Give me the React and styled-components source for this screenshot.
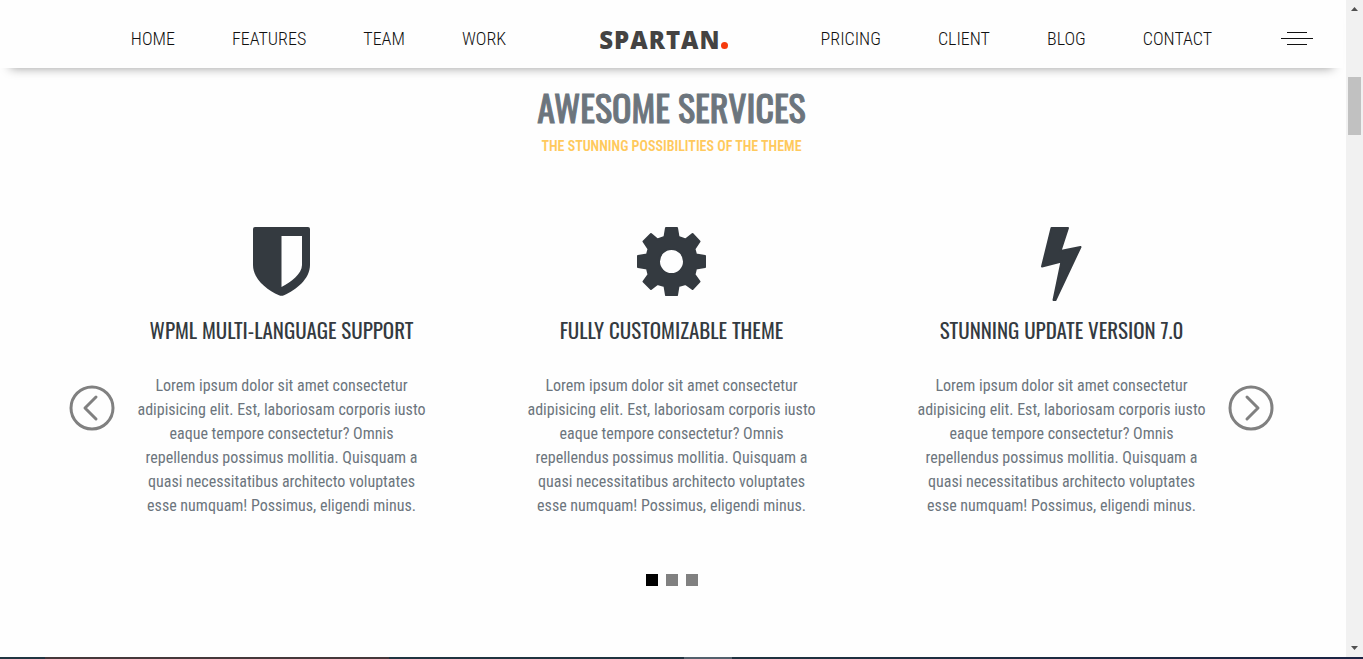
import React from "react";
import styled, { createGlobalStyle } from "styled-components";

const condensed = `"Roboto Condensed", "Liberation Sans Narrow", "Liberation Sans", sans-serif`;
const display = `Oswald, "Roboto Condensed", "Liberation Sans Narrow", "Liberation Sans", sans-serif`;

const GlobalStyle = createGlobalStyle`
  *, *::before, *::after { box-sizing: border-box; }
  body { margin: 0; background: #fff; font-family: ${condensed}; }
`;

const Screen = styled.div`
  display: flex;
  flex-direction: column;
  min-height: 100vh;
`;

const Viewport = styled.div`
  display: flex;
  flex: 1;
`;

const Page = styled.div`
  flex: 1;
  padding-right: 3px;
  background: #fefefe;
`;

const Header = styled.header`
  display: grid;
  grid-template-columns: 62px 1fr 62px;
  align-items: center;
  height: 68px;
  padding-top: 9px;
  background: #fefefe;
  box-shadow: 0 10px 10px -10px rgba(0, 0, 0, 0.4);
`;

const NavBar = styled.div`
  grid-column: 2;
  display: flex;
  align-items: center;
  justify-content: center;
  gap: 93px;
`;

const Nav = styled.nav`
  display: flex;
  gap: 57px;
`;

const NavLink = styled.a`
  color: #111;
  font-size: 18px;
  line-height: 24px;
  font-weight: 300;
  text-decoration: none;
`;

const Logo = styled.a`
  display: flex;
  align-items: baseline;
  padding-top: 2px;
  color: #444342;
  font-family: "Open Sans", "Noto Sans", sans-serif;
  font-size: 24px;
  line-height: 30px;
  font-weight: 800;
  letter-spacing: 1px;
  text-decoration: none;
`;

const LogoDot = styled.span`
  width: 7px;
  height: 7px;
  border-radius: 50%;
  background: #f63a0c;
`;

const MenuButton = styled.button`
  display: flex;
  flex-direction: column;
  align-items: center;
  gap: 5px;
  width: 32px;
  padding: 0;
  border: 0;
  background: none;
`;

const MenuLine = styled.span`
  width: ${(p) => (p.$wide ? 32 : 20)}px;
  height: 1px;
  background: #111;
`;

const Services = styled.section`
  padding: 15px 64px 71px;
  text-align: center;
`;

const Title = styled.h2`
  margin: 0;
  color: #6c757d;
  font-family: ${display};
  font-size: 36px;
  line-height: 48px;
  font-weight: 400;
  -webkit-text-stroke: 1px currentColor;
`;

const Subtitle = styled.p`
  margin: 5px 0 0;
  color: #ffc95c;
  font-size: 14px;
  line-height: 20px;
  font-weight: 600;
`;

const Carousel = styled.div`
  display: flex;
  align-items: center;
  justify-content: space-between;
  margin-top: 71px;
`;

const ArrowButton = styled.button`
  flex: none;
  width: 56px;
  height: 56px;
  margin-top: 70px;
  padding: 0;
  border: 0;
  background: none;
  color: #808080;
`;

const Slides = styled.div`
  display: grid;
  grid-template-columns: repeat(3, 1fr);
  gap: 90px;
  flex: 1;
  max-width: 1080px;
`;

const Card = styled.article`
  display: flex;
  flex-direction: column;
  align-items: center;
`;

const IconBox = styled.div`
  height: 80px;
  color: #343a40;
`;

const CardTitle = styled.h3`
  margin: 8px 0 0;
  color: #343a40;
  font-family: ${display};
  font-size: 21px;
  line-height: 30px;
  font-weight: 400;
  white-space: nowrap;
`;

const CardText = styled.p`
  max-width: 300px;
  margin: 29px 0 0;
  color: #6c757d;
  font-size: 16px;
  line-height: 24px;
`;

const Dots = styled.div`
  display: flex;
  justify-content: center;
  gap: 8px;
  margin-top: 56px;
`;

const Dot = styled.button`
  width: 12px;
  height: 12px;
  padding: 0;
  border: 0;
  background: ${(p) => (p.$active ? "#000" : "#808080")};
`;

const Scrollbar = styled.div`
  display: flex;
  flex-direction: column;
  align-items: center;
  justify-content: space-between;
  width: 17px;
  background: #f1f1f1;
`;

const ScrollArrow = styled.svg`
  display: block;
  width: 17px;
  height: 17px;
  fill: #505050;
`;

const ScrollTrack = styled.div`
  flex: 1;
  padding-top: 60px;
`;

const ScrollThumb = styled.div`
  width: 13px;
  height: 58px;
  background: #c1c1c1;
`;

const DesktopEdge = styled.footer`
  display: flex;
  height: 2px;
  background: linear-gradient(90deg, #213642, #1f3340 55%, #1b2444);
`;

const EdgeTab = styled.span`
  width: ${(p) => p.$width}px;
  margin-left: ${(p) => p.$space}px;
  background: ${(p) => p.$tone};
`;

const ShieldIcon = () => (
  <svg width="58" height="70" viewBox="0 0 58 70" aria-hidden="true">
    <path fill="currentColor" fillRule="evenodd" d="M2 0H55Q57 0 57 2V38C57 52 43 63 31 68.200Q28.500 69.200 26 68.200C14 63 0 52 0 38V2Q0 0 2 0ZM28.500 9V60C38 55 49 47 49 38V9Z" />
  </svg>
);

const GearIcon = () => (
  <svg width="70" height="70" viewBox="0 0 70 70" aria-hidden="true">
    <path
      fill="currentColor"
      fillRule="evenodd"
      stroke="currentColor"
      strokeWidth="2"
      strokeLinejoin="round"
      d="M29 1H40L41.500 10L48.500 12.500L55.500 7L62.500 14.500L57.500 22L59 27.500L68 29V40L59 41.500L57.500 47.500L62.500 54.500L55.500 62L48.500 57L41.500 59L40 68H29L27.500 59L20.500 57L14 62L6.500 54.500L11.500 47.500L10 41.500L1 40V29L10 27.500L11.500 22L6.500 14.500L14 7L20.500 12.500L27.500 10ZM34.500 22A12.500 12.500 0 1 0 34.500 47A12.500 12.500 0 1 0 34.500 22Z"
    />
  </svg>
);

const BoltIcon = () => (
  <svg width="42" height="76" viewBox="0 0 42 76" aria-hidden="true">
    <path fill="currentColor" stroke="currentColor" strokeWidth="2" strokeLinejoin="round" d="M10.500 1H27L19.500 24L39.500 20L14.500 73H12.500L20.500 34.500L1 39.500Z" />
  </svg>
);

const CircleArrow = ({ d }) => (
  <svg width="56" height="56" viewBox="0 0 56 56" fill="none" stroke="currentColor" strokeWidth="3" strokeLinecap="round" strokeLinejoin="round" aria-hidden="true">
    <circle cx="28" cy="28" r="21" />
    <path d={d} />
  </svg>
);

const leftLinks = ["HOME", "FEATURES", "TEAM", "WORK"];
const rightLinks = ["PRICING", "CLIENT", "BLOG", "CONTACT"];
const copy =
  "Lorem ipsum dolor sit amet consectetur adipisicing elit. Est, laboriosam corporis iusto eaque tempore consectetur? Omnis repellendus possimus mollitia. Quisquam a quasi necessitatibus architecto voluptates esse numquam! Possimus, eligendi minus.";
const services = [
  { title: "WPML MULTI-LANGUAGE SUPPORT", Icon: ShieldIcon },
  { title: "FULLY CUSTOMIZABLE THEME", Icon: GearIcon },
  { title: "STUNNING UPDATE VERSION 7.0", Icon: BoltIcon },
];

const Links = ({ items, label }) => (
  <Nav aria-label={label}>
    {items.map((item) => (
      <NavLink key={item} href={`#${item.toLowerCase()}`}>{item}</NavLink>
    ))}
  </Nav>
);

export default function App() {
  return (
    <Screen>
      <GlobalStyle />
      <Viewport>
        <Page>
          <Header>
            <NavBar>
              <Links items={leftLinks} label="Primary" />
              <Logo href="#top">SPARTAN<LogoDot /></Logo>
              <Links items={rightLinks} label="Secondary" />
            </NavBar>
            <MenuButton aria-label="Open menu">
              <MenuLine />
              <MenuLine $wide />
              <MenuLine />
            </MenuButton>
          </Header>
          <Services>
            <Title>AWESOME SERVICES</Title>
            <Subtitle>THE STUNNING POSSIBILITIES OF THE THEME</Subtitle>
            <Carousel>
              <ArrowButton aria-label="Previous"><CircleArrow d="M32 17L21 28L32 39" /></ArrowButton>
              <Slides>
                {services.map(({ title, Icon }) => (
                  <Card key={title}>
                    <IconBox><Icon /></IconBox>
                    <CardTitle>{title}</CardTitle>
                    <CardText>{copy}</CardText>
                  </Card>
                ))}
              </Slides>
              <ArrowButton aria-label="Next"><CircleArrow d="M24 17L35 28L24 39" /></ArrowButton>
            </Carousel>
            <Dots>
              <Dot $active aria-label="Slide 1" />
              <Dot aria-label="Slide 2" />
              <Dot aria-label="Slide 3" />
            </Dots>
          </Services>
        </Page>
        <Scrollbar aria-hidden="true">
          <ScrollArrow viewBox="0 0 17 17"><path d="M5 11L8.500 7L12 11Z" /></ScrollArrow>
          <ScrollTrack><ScrollThumb /></ScrollTrack>
          <ScrollArrow viewBox="0 0 17 17"><path d="M5 6L8.500 10L12 6Z" /></ScrollArrow>
        </Scrollbar>
      </Viewport>
      <DesktopEdge>
        <EdgeTab $space={45} $width={344} $tone="#45383b" />
        <EdgeTab $space={295} $width={48} $tone="#53616d" />
      </DesktopEdge>
    </Screen>
  );
}
